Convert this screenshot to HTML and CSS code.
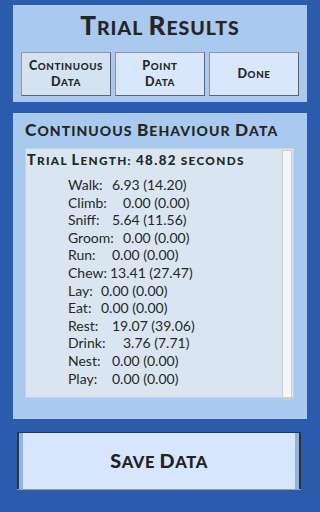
FILE: index.html
```html
<!DOCTYPE html>
<html lang="en">
<head>
    <meta charset="UTF-8">
    <meta name="viewport" content="width=device-width, initial-scale=1.0">
    <title>Trial Results</title>
    <link rel="stylesheet" href="styles.css">
</head>
<body>

    <div class="panel top">
        <h1 class="title"><span class="i">T</span>rial <span class="i">R</span>esults</h1>
        <div class="tabs">
            <button class="tab active"><span class="i">C</span>ontinuous<br><span class="i">D</span>ata</button>
            <button class="tab"><span class="i">P</span>oint<br><span class="i">D</span>ata</button>
            <button class="tab"><span class="i">D</span>one</button>
        </div>
    </div>

    <div class="panel results">
        <h2 class="heading"><span class="i">C</span>ontinuous <span class="i">B</span>ehaviour <span class="i">D</span>ata</h2>
        <div class="data-box">
            <div class="data-text">
                <div class="length"><span class="i">T</span>rial <span class="i">L</span>ength: <span class="num">48.82</span> seconds</div>
                <div class="rows">
                    <div class="row"><span class="label mid">Walk:</span>6.93 (14.20)</div>
                    <div class="row"><span class="label long">Climb:</span>0.00 (0.00)</div>
                    <div class="row"><span class="label mid">Sniff:</span>5.64 (11.56)</div>
                    <div class="row"><span class="label long">Groom:</span>0.00 (0.00)</div>
                    <div class="row"><span class="label mid">Run:</span>0.00 (0.00)</div>
                    <div class="row"><span class="label chew">Chew:</span>13.41 (27.47)</div>
                    <div class="row"><span class="label short">Lay:</span>0.00 (0.00)</div>
                    <div class="row"><span class="label short">Eat:</span>0.00 (0.00)</div>
                    <div class="row"><span class="label mid">Rest:</span>19.07 (39.06)</div>
                    <div class="row"><span class="label long">Drink:</span>3.76 (7.71)</div>
                    <div class="row"><span class="label mid">Nest:</span>0.00 (0.00)</div>
                    <div class="row"><span class="label mid">Play:</span>0.00 (0.00)</div>
                </div>
            </div>
            <div class="scrollbar"></div>
        </div>
    </div>

    <button class="save"><span class="i">S</span>ave <span class="i">D</span>ata</button>

</body>
</html>
```

FILE: styles.css
```css
body {
    margin: 0;
    padding: 5px 13px 0;
    background-color: #2b5bad;
    font-family: "Lato", "Open Sans", sans-serif;
    color: #222;
    height: 512px;
    box-sizing: border-box;
}

/* заглавные буквы крупнее остальных */
.title, .tab, .heading, .length, .save {
    text-transform: uppercase;
}

.i {
    font-size: 1.34em;
}

.panel {
    background-color: #a9c9ef;
}

.top {
    height: 97px;
    box-sizing: border-box;
    padding: 0 8px;
}

.title {
    margin: 0;
    height: 47px;
    line-height: 40px;
    text-align: center;
    font-size: 19.5px;
    font-weight: 900;
    letter-spacing: 1px;
    color: #262626;
}

.tabs {
    display: flex;
    gap: 4px;
}

.tab {
    width: 90px;
    height: 44px;
    padding: 0;
    background-color: #d8e7fc;
    border: 1px solid #5a6474;
    border-top-color: #8c96a4;
    border-left-color: #8c96a4;
    font-family: inherit;
    font-size: 9.8px;
    font-weight: 900;
    letter-spacing: 0.6px;
    line-height: 15px;
    color: #262626;
}

.tab .i {
    font-size: 1.28em;
}

.tab.active {
    background-color: #d4e2f1;
}

.results {
    margin-top: 11px;
    height: 306px;
    box-sizing: border-box;
    padding: 0 13px 0 12px;
}

.heading {
    margin: 0;
    height: 35px;
    line-height: 34px;
    font-size: 14px;
    font-weight: 900;
    letter-spacing: 1.05px;
    color: #262626;
}

.heading .i {
    font-size: 1.23em;
}

.data-box {
    display: flex;
    height: 250px;
    background-color: #d9e6f1;
    border: 1px solid #c4d4e4;
    box-sizing: border-box;
}

.data-text {
    flex: 1;
    padding: 0 0 0 1px;
}

.length {
    font-size: 11.8px;
    font-weight: 900;
    letter-spacing: 1.3px;
    line-height: 22px;
    color: #262626;
}

.length .i {
    font-size: 1.22em;
}

.length .num {
    font-size: 1.13em;
}

.rows {
    padding: 4px 0 0 41px;
}

.row {
    font-size: 14px;
    line-height: 17.6px;
    white-space: nowrap;
    color: #262626;
}

.label {
    display: inline-block;
}

.label.short {
    width: 33px;
}

.label.mid {
    width: 44px;
}

.label.long {
    width: 55px;
}

.label.chew {
    width: 42px;
}

.scrollbar {
    width: 8px;
    margin: 1px 1px 0 0;
    height: 246px;
    background-color: #f4f6f9;
    border: 1px solid #c9cdd3;
    border-bottom-width: 3px;
}

.save {
    display: block;
    margin: 13px 0 0 4px;
    width: 284px;
    height: 58px;
    padding-bottom: 3px;
    background-color: #d6e6fc;
    border: none;
    border-top: 1px solid #333;
    border-bottom: 1px solid #9aa0a8;
    box-shadow: inset 2px 0 #333, inset 6px 0 #8ab6ee, inset -2px 0 #3a2d22, inset -6px 0 #8ab6ee;
    font-family: inherit;
    font-size: 16.5px;
    font-weight: 900;
    letter-spacing: 0.6px;
    color: #222;
}

.save .i {
    font-size: 1.2em;
}
```
